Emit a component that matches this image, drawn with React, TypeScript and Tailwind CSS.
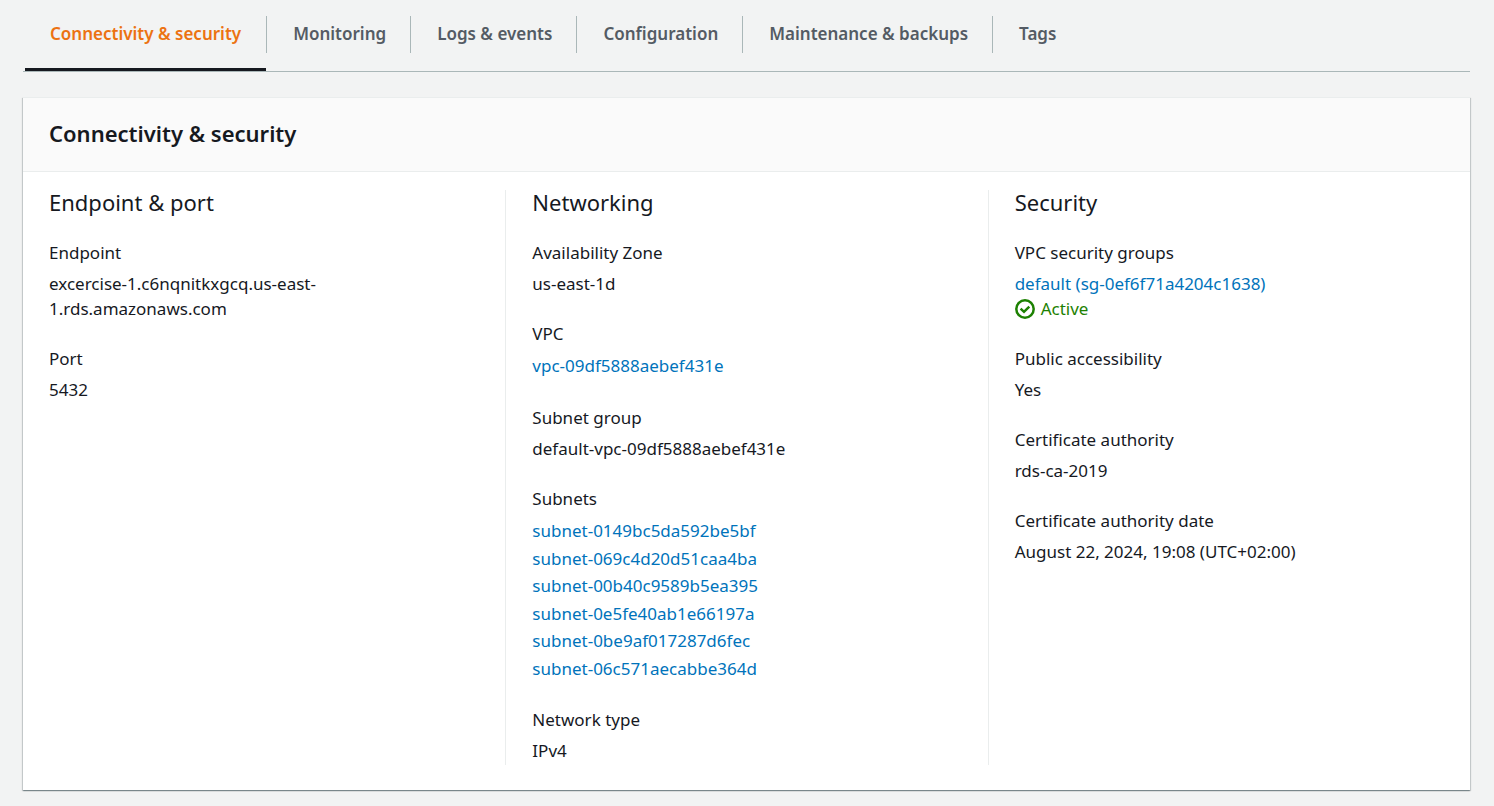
import type { ReactNode } from "react";

const tabs = [
  "Connectivity & security",
  "Monitoring",
  "Logs & events",
  "Configuration",
  "Maintenance & backups",
  "Tags",
];

const subnets = [
  "subnet-0149bc5da592be5bf",
  "subnet-069c4d20d51caa4ba",
  "subnet-00b40c9589b5ea395",
  "subnet-0e5fe40ab1e66197a",
  "subnet-0be9af017287d6fec",
  "subnet-06c571aecabbe364d",
];

function Tab({ label, active }: { label: string; active: boolean }) {
  return (
    <li className="group relative flex h-[71px] pt-4">
      <button
        type="button"
        role="tab"
        aria-selected={active}
        className={
          "h-[37px] border-r border-[#aab7b8] pr-6 pb-[2px] pl-[26px] text-[17px] leading-[35px] font-semibold whitespace-nowrap group-first:px-[25px] group-last:border-r-0 " +
          (active ? "text-[#ec7211]" : "text-[#545b64]")
        }
      >
        {label}
      </button>
      {active && <span className="absolute right-px bottom-0 left-0 h-[3px] bg-[#16191f]" />}
    </li>
  );
}

function Column({ title, children }: { title: string; children: ReactNode }) {
  return (
    <section className="border-l border-[#eaeded] px-[26px] pb-[2px] first:border-l-0">
      <h3 className="text-[22px] leading-[25px]">{title}</h3>
      <dl className="mt-[25px] flex flex-col gap-[25px]">{children}</dl>
    </section>
  );
}

function Field({ label, children }: { label: string; children: ReactNode }) {
  return (
    <div>
      <dt>{label}</dt>
      <dd className="mt-[6px]">{children}</dd>
    </div>
  );
}

function Link({ children }: { children: ReactNode }) {
  return (
    <a href="#" className="text-[#0073bb] hover:underline">
      {children}
    </a>
  );
}

function CheckCircle() {
  return (
    <svg viewBox="0 0 20 20" className="size-5" fill="none" stroke="currentColor" strokeWidth="2.5" aria-hidden="true">
      <circle cx="10" cy="10" r="8.7" />
      <path d="M5.6 9.6 9 12.8l5.3-5.2" />
    </svg>
  );
}

export default function App() {
  return (
    <main className="min-h-screen bg-[#f2f3f3] pr-6 pb-4 pl-[23px] font-['Noto_Sans','Open_Sans',sans-serif] text-[17px] leading-[25px] text-[#16191f]">
      <nav className="border-b border-[#aab7b8]">
        <ul role="tablist" className="flex pl-[2px]">
          {tabs.map((label, i) => (
            <Tab key={label} label={label} active={i === 0} />
          ))}
        </ul>
      </nav>

      <div className="mt-[25px] border-t border-[#eaeded] bg-white shadow-[0_1px_1px_0_rgba(0,28,36,0.3),1px_1px_1px_0_rgba(0,28,36,0.15),-1px_1px_1px_0_rgba(0,28,36,0.15)]">
        <header className="border-b border-[#eaeded] bg-[#fafafa] px-[26px] pt-[21px] pb-[23px]">
          <h2 className="text-[22px] leading-[29px] font-semibold">Connectivity &amp; security</h2>
        </header>

        <div className="grid grid-cols-3 pt-[18px] pb-[25px]">
          <Column title="Endpoint & port">
            <Field label="Endpoint">excercise-1.c6nqnitkxgcq.us-east-1.rds.amazonaws.com</Field>
            <Field label="Port">5432</Field>
          </Column>

          <Column title="Networking">
            <Field label="Availability Zone">us-east-1d</Field>
            <Field label="VPC">
              <div className="leading-[28px]">
                <Link>vpc-09df5888aebef431e</Link>
              </div>
            </Field>
            <Field label="Subnet group">default-vpc-09df5888aebef431e</Field>
            <Field label="Subnets">
              <ul>
                {subnets.map((id) => (
                  <li key={id} className="odd:leading-[28px] even:leading-[27px]">
                    <Link>{id}</Link>
                  </li>
                ))}
              </ul>
            </Field>
            <Field label="Network type">IPv4</Field>
          </Column>

          <Column title="Security">
            <Field label="VPC security groups">
              <Link>default (sg-0ef6f71a4204c1638)</Link>
              <div className="flex items-center gap-[6px] text-[#1d8102]">
                <CheckCircle />
                Active
              </div>
            </Field>
            <Field label="Public accessibility">Yes</Field>
            <Field label="Certificate authority">rds-ca-2019</Field>
            <Field label="Certificate authority date">August 22, 2024, 19:08 (UTC+02:00)</Field>
          </Column>
        </div>
      </div>
    </main>
  );
}
